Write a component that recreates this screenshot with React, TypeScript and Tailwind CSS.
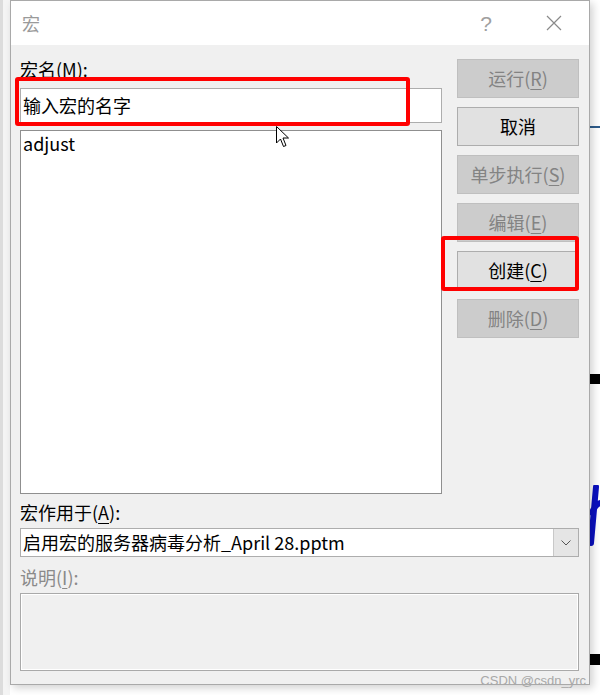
import { ReactNode } from 'react'

const font = { fontFamily: '"Microsoft YaHei UI", "Noto Sans CJK SC", "Noto Sans", sans-serif' }

function Key({ children }: { children: ReactNode }) {
  return <span className="underline underline-offset-[3px] decoration-1">{children}</span>
}

function DialogButton({ label, hotkey, disabled }: { label: string; hotkey?: string; disabled?: boolean }) {
  return (
    <div
      className={
        disabled
          ? 'h-[39px] flex items-center justify-center border border-[#bfbfbf] bg-[#cccccc] text-[#838383] text-[18px]'
          : 'h-[39px] flex items-center justify-center border border-[#adadad] bg-[#e1e1e1] text-black text-[18px]'
      }
    >
      {label}
      {hotkey && (
        <>
          (<Key>{hotkey}</Key>)
        </>
      )}
    </div>
  )
}

export default function App() {
  return (
    <div className="relative w-[600px] h-[695px] bg-white overflow-hidden flex" style={font}>
      {/* desktop behind the dialog */}
      <div className="w-[10px] h-full bg-[#f4f4f4] border-l-[3px] border-[#dcdcdc]" />

      <div className="relative z-10 w-[580px] h-[685px] flex flex-col border border-[#a9a9a9] shadow-[3px_3px_8px_rgba(0,0,0,0.18)]">
        {/* title bar */}
        <div className="h-[44px] bg-white flex items-center pl-[11px] pr-[24px]">
          <span className="text-[18px] text-[#9a9a9a]">宏</span>
          <span
            className="ml-auto text-[21px] text-[#a0a0a0] mr-[54px] leading-none"
            style={{ fontFamily: '"Liberation Sans", sans-serif', fontWeight: 300 }}
          >
            ?
          </span>
          <svg width="16" height="16" viewBox="0 0 16 16" className="mr-[3px]">
            <path d="M1 1 L15 15 M15 1 L1 15" stroke="#8a8a8a" strokeWidth="1.2" />
          </svg>
        </div>

        {/* body */}
        <div className="flex-1 bg-[#f0f0f0] pl-[9px] pr-[10px] pt-[13px] flex flex-col text-[18px] text-black">
          <div className="flex gap-[15px]">
            <div className="w-[422px] flex flex-col">
              <div className="h-[30px] leading-[22px]">宏名(M):</div>
              <div className="h-[35px] bg-white border border-[#adadad] flex items-center pl-[2px]">输入宏的名字</div>
              <div className="mt-[7px] h-[364px] bg-white border border-[#8f8f8f] pl-[2px] leading-[24px]">adjust</div>
            </div>
            <div className="w-[122px] flex flex-col gap-[9px] pt-[1px]">
              <DialogButton label="运行" hotkey="R" disabled />
              <DialogButton label="取消" />
              <DialogButton label="单步执行" hotkey="S" disabled />
              <DialogButton label="编辑" hotkey="E" disabled />
              <DialogButton label="创建" hotkey="C" />
              <DialogButton label="删除" hotkey="D" disabled />
            </div>
          </div>

          <div className="mt-[7px] h-[22px] leading-[22px]">
            宏作用于(<Key>A</Key>):
          </div>
          <div className="mt-[5px] h-[29px] bg-white border border-[#adadad] flex items-center">
            <span className="pl-[2px] flex-1">启用宏的服务器病毒分析_April 28.pptm</span>
            <div className="w-[25px] h-full bg-[#e5e5e5] border-l border-[#c8c8c8] flex items-center justify-center">
              <svg width="10" height="6" viewBox="0 0 10 6">
                <path d="M0.5 0.5 L5 5 L9.5 0.5" stroke="#555" strokeWidth="1" fill="none" />
              </svg>
            </div>
          </div>
          <div className="mt-[9px] h-[22px] leading-[22px] text-[#8a8a8a]">
            说明(<Key>I</Key>):
          </div>
          <div className="mt-[5px] h-[78px] bg-[#f0f0f0] border border-[#a9a9a9] shadow-[inset_0_0_0_1px_#ffffff]" />
        </div>

        <span
          className="absolute right-[3px] bottom-[-3px] text-[13px] text-[#a8a8a8] leading-none"
          style={{ fontFamily: '"Liberation Sans", Arial, sans-serif' }}
        >
          CSDN @csdn_yrc
        </span>
      </div>

      {/* annotations over the dialog */}
      <div className="absolute z-20 left-[15px] top-[77px] w-[395px] h-[49px] border-[4px] border-[#ff0000] rounded-[3px]" />
      <div className="absolute z-20 left-[441px] top-[236px] w-[138px] h-[55px] border-[4px] border-[#ff0000] rounded-[3px]" />

      {/* mouse pointer */}
      <svg className="absolute z-30 left-[276px] top-[126px]" width="14" height="22" viewBox="0 0 14 22">
        <path d="M0.5 0.5 L0.5 17 L4.5 13 L7.5 20.5 L10 19.5 L7 12 L12.5 12 Z" fill="#fff" stroke="#000" strokeWidth="1" strokeLinejoin="miter" />
      </svg>

      {/* slide content peeking out on the right */}
      <div className="absolute left-[590px] top-[126px] w-[10px] h-[2px] bg-[#2f5d8c]" />
      <div className="absolute left-[590px] top-[374px] w-[10px] h-[10px] bg-black" />
      <div className="absolute left-[590px] top-[654px] w-[10px] h-[11px] bg-black" />
      <svg className="absolute left-[587px] top-[485px]" width="13" height="62" viewBox="0 0 13 62">
        <path d="M9 2 C8 15 6 35 4 58 M5 28 C7 22 10 19 13 18" stroke="#0a10c0" strokeWidth="6" fill="none" strokeLinecap="round" />
      </svg>
    </div>
  )
}
